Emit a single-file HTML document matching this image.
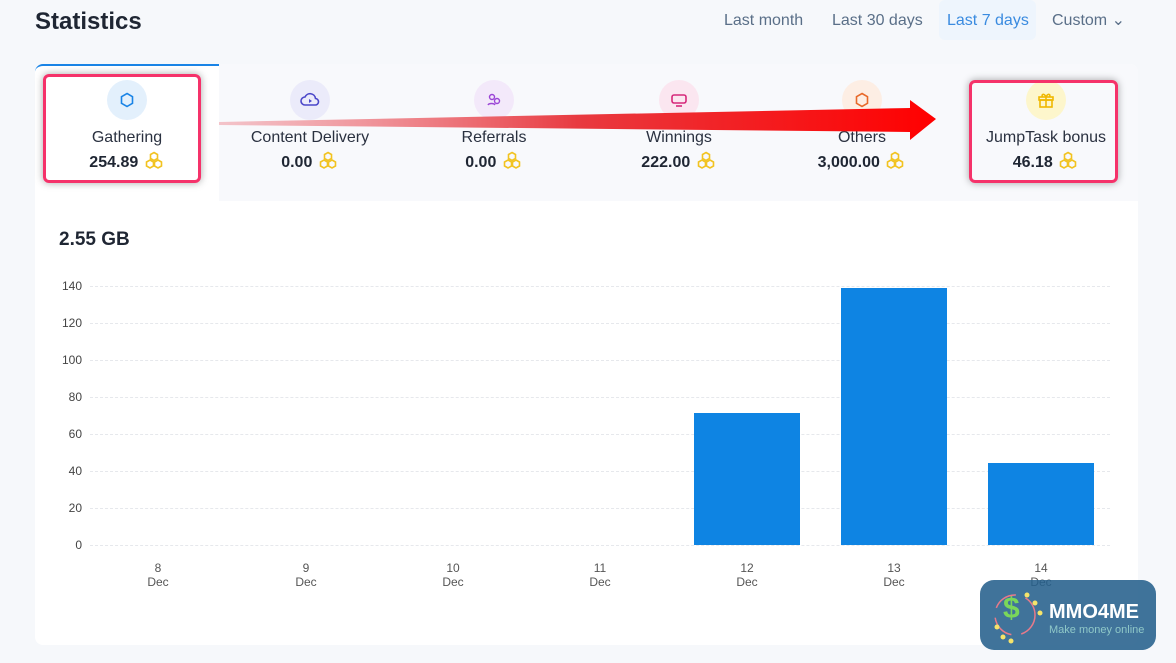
<!DOCTYPE html>
<html><head><meta charset="utf-8"><style>
*{margin:0;padding:0;box-sizing:border-box}
body{width:1176px;height:663px;background:#f6f8fb;font-family:"Liberation Sans",sans-serif;position:relative;overflow:hidden;color:#1f2633}
.abs{position:absolute}
h1{position:absolute;left:35px;top:8px;font-size:24px;font-weight:bold;color:#1f2633}
.rng{position:absolute;top:10px;font-size:16px;color:#5a6f88;height:30px;line-height:22px}
.card{position:absolute;left:35px;top:64px;width:1103px;height:581px;background:#fff;border-radius:8px}
.strip{position:absolute;left:219px;top:64px;width:919px;height:137px;background:#f8f9fc;border-radius:0 8px 0 0}
.act{position:absolute;left:35px;top:64px;width:184px;height:137px;background:#fff;border-top:2px solid #1a84e6;border-radius:8px 0 0 0}
.tab{position:absolute;top:80px;width:180px;text-align:center}
.ic{width:40px;height:40px;border-radius:50%;margin:0 auto;display:flex;align-items:center;justify-content:center}
.lb{font-size:16px;color:#2a3140;margin-top:9px}
.vl{font-size:16px;font-weight:bold;color:#1f2633;margin-top:4px}
.hl{position:absolute;border:3px solid #f5326a;border-radius:6px;box-shadow:0 0 8px rgba(0,0,0,.35)}
.yl{position:absolute;left:50px;width:32px;text-align:right;font-size:12px;color:#444}
.gl{position:absolute;left:90px;width:1020px;border-top:1px dashed #e6e8ec}
.xl{position:absolute;top:561px;width:60px;text-align:center;font-size:12px;color:#555;line-height:14px}
.bar{position:absolute;background:#0e84e3;width:106px}
</style></head><body>
<h1>Statistics</h1>
<div class="rng" style="left:724px">Last month</div>
<div class="rng" style="left:832px">Last 30 days</div>
<div class="abs" style="left:939px;top:0;width:97px;height:40px;background:#eef5fd;border-radius:6px"></div>
<div class="rng" style="left:947px;color:#3a8be0">Last 7 days</div>
<div class="rng" style="left:1052px">Custom ⌄</div>
<div class="card"></div>
<div class="strip"></div>
<div class="act"></div>
<svg width="0" height="0" style="position:absolute"><defs><symbol id="hc" viewBox="0 0 20 20"><g fill="none" stroke="#f2c320" stroke-width="1.6"><path d="M10 1.5l3.5 2v4l-3.5 2-3.5-2v-4z"/><path d="M6 9l3.5 2v4L6 17l-3.5-2v-4z"/><path d="M14 9l3.5 2v4L14 17l-3.5-2v-4z"/></g></symbol></defs></svg>
<div class="tab" style="left:37px"><div class="ic" style="background:#e3f0fc"><svg width="16" height="16" viewBox="0 0 16 16"><path d="M8 1.5l5.5 3.2v6.6L8 14.5l-5.5-3.2V4.7z" fill="none" stroke="#1a84e6" stroke-width="1.6"/></svg></div><div class="lb">Gathering</div><div class="vl">254.89 <svg width="22" height="20" style="vertical-align:-4px"><use href="#hc"/></svg></div></div>
<div class="tab" style="left:220px"><div class="ic" style="background:#ebebfa"><svg width="20" height="16" viewBox="0 0 20 16"><path d="M5 13a4 4 0 010-8 5.5 5.5 0 0110.5 1.5A3.2 3.2 0 0115 13z" fill="none" stroke="#4b47c9" stroke-width="1.6"/><path d="M9 7v4l3-2z" fill="#4b47c9"/></svg></div><div class="lb">Content Delivery</div><div class="vl">0.00 <svg width="22" height="20" style="vertical-align:-4px"><use href="#hc"/></svg></div></div>
<div class="tab" style="left:404px"><div class="ic" style="background:#f3e9fa"><svg width="16" height="16" viewBox="0 0 16 16" fill="none" stroke="#9b45d6" stroke-width="1.4"><circle cx="6" cy="5" r="2.5"/><circle cx="11" cy="9" r="2.5"/><path d="M2 13c1-2 6-2 7 0"/></svg></div><div class="lb">Referrals</div><div class="vl">0.00 <svg width="22" height="20" style="vertical-align:-4px"><use href="#hc"/></svg></div></div>
<div class="tab" style="left:589px"><div class="ic" style="background:#fbe6f0"><svg width="18" height="16" viewBox="0 0 18 16" fill="none" stroke="#d6287a" stroke-width="1.6"><rect x="2" y="3" width="14" height="8" rx="2"/><path d="M6 14h6"/></svg></div><div class="lb">Winnings</div><div class="vl">222.00 <svg width="22" height="20" style="vertical-align:-4px"><use href="#hc"/></svg></div></div>
<div class="tab" style="left:772px"><div class="ic" style="background:#fdeee4"><svg width="16" height="16" viewBox="0 0 16 16"><path d="M8 1.5l5.5 3.2v6.6L8 14.5l-5.5-3.2V4.7z" fill="none" stroke="#e8692a" stroke-width="1.6"/></svg></div><div class="lb">Others</div><div class="vl">3,000.00 <svg width="22" height="20" style="vertical-align:-4px"><use href="#hc"/></svg></div></div>
<div class="tab" style="left:956px"><div class="ic" style="background:#fdf6cc"><svg width="20" height="20" viewBox="0 0 20 20" fill="none" stroke="#f0b800" stroke-width="1.6"><rect x="3" y="7" width="14" height="3"/><rect x="4" y="10" width="12" height="7"/><path d="M10 7v10M10 7C8 3 5 4 6.5 7M10 7c2-4 5-3 3.5 0"/></svg></div><div class="lb">JumpTask bonus</div><div class="vl">46.18 <svg width="22" height="20" style="vertical-align:-4px"><use href="#hc"/></svg></div></div>
<svg class="abs" style="left:0;top:0" width="1176" height="250"><defs><linearGradient id="ag" x1="0" x2="1"><stop offset="0" stop-color="#f0a0a8" stop-opacity=".6"/><stop offset=".5" stop-color="#e83a40"/><stop offset="1" stop-color="#ff0000"/></linearGradient></defs><path d="M219 122L910 108V100L936 119L910 140V132L219 125Z" fill="url(#ag)"/></svg>
<div class="hl" style="left:43px;top:74px;width:158px;height:109px"></div>
<div class="hl" style="left:969px;top:80px;width:149px;height:103px"></div>
<div class="abs" style="left:59px;top:229px;font-size:19px;font-weight:bold">2.55 GB</div>
<div class="gl" style="top:286px"></div><div class="yl" style="top:279px">140</div>
<div class="gl" style="top:323px"></div><div class="yl" style="top:316px">120</div>
<div class="gl" style="top:360px"></div><div class="yl" style="top:353px">100</div>
<div class="gl" style="top:397px"></div><div class="yl" style="top:390px">80</div>
<div class="gl" style="top:434px"></div><div class="yl" style="top:427px">60</div>
<div class="gl" style="top:471px"></div><div class="yl" style="top:464px">40</div>
<div class="gl" style="top:508px"></div><div class="yl" style="top:501px">20</div>
<div class="gl" style="top:545px"></div><div class="yl" style="top:538px">0</div>
<div class="bar" style="left:694px;top:413px;height:132px"></div>
<div class="bar" style="left:841px;top:288px;height:257px"></div>
<div class="bar" style="left:988px;top:463px;height:82px"></div>
<div class="xl" style="left:128px">8<br>Dec</div>
<div class="xl" style="left:276px">9<br>Dec</div>
<div class="xl" style="left:423px">10<br>Dec</div>
<div class="xl" style="left:570px">11<br>Dec</div>
<div class="xl" style="left:717px">12<br>Dec</div>
<div class="xl" style="left:864px">13<br>Dec</div>
<div class="xl" style="left:1011px">14<br>Dec</div>
<div class="abs" style="left:980px;top:580px;width:176px;height:70px;background:rgba(38,96,140,.88);border-radius:14px"></div>
<div class="abs" style="left:1003px;top:592px;font-size:30px;font-weight:bold;color:#7ad65a">$</div>
<svg class="abs" style="left:985px;top:585px" width="60" height="60"><circle cx="30" cy="30" r="20" fill="none" stroke="#e87a8a" stroke-width="1.5" stroke-dasharray="25 10"/><g fill="#f6e46a"><circle cx="42" cy="10" r="2.5"/><circle cx="50" cy="18" r="2.5"/><circle cx="12" cy="42" r="2.5"/><circle cx="18" cy="52" r="2.5"/><circle cx="26" cy="56" r="2.5"/><circle cx="55" cy="28" r="2.5"/></g></svg>
<div class="abs" style="left:1049px;top:601px;font-size:20px;font-weight:bold;color:#fff">MMO4ME</div>
<div class="abs" style="left:1049px;top:624px;font-size:11px;color:#8fc8c8">Make money online</div>
</body></html>
